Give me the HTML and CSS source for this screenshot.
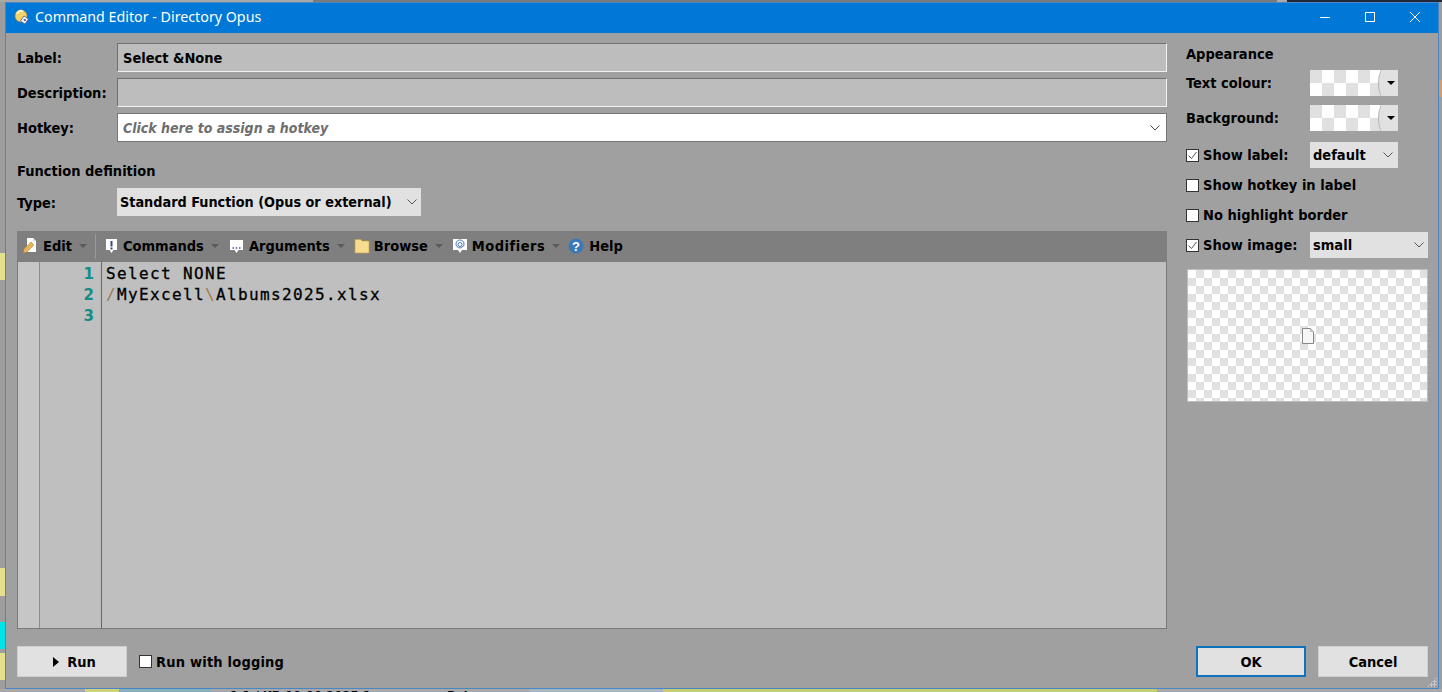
FILE: index.html
```html
<!DOCTYPE html>
<html lang="en">
<head>
<meta charset="utf-8">
<title>Command Editor - Directory Opus</title>
<link rel="stylesheet" href="styles.css">
</head>
<body>
<div class="desk-top"><span class="dt-a"></span><span class="dt-b"></span><span class="dt-c"></span><span class="dt-d"></span></div>
<div class="scrap scrap-y1"></div>
<div class="scrap scrap-y2"></div>
<div class="scrap scrap-c"></div>
<div class="scrap scrap-y3"></div>
<div class="scrap-r"></div>
<div class="desk-bottom"><span class="desk-y"></span><span class="desk-b"></span><span class="desk-text">1 1 / KB 00:00 2025 1</span><span class="desk-text2">Bytes</span><span class="desk-b2"></span><span class="desk-g"></span></div>
<div class="window">
  <header class="titlebar">
    <svg class="app-icon" viewBox="0 0 16 16" width="16" height="16"><circle cx="7" cy="7" r="6" fill="#f4d26a" stroke="#a98a3a" stroke-width=".7"/><path d="M3 5a4 4 0 0 1 6-2.5" stroke="#fff6c8" stroke-width="2" fill="none"/><path d="M10 7l4.5 3-3.500 5-4.500-3z" fill="#fff" stroke="#4a5a90" stroke-width=".8"/><circle cx="10.800" cy="11" r="1.200" fill="#5a6cb0"/></svg>
    <span class="title-text">Command Editor - Directory Opus</span>
    <div class="caption">
      <svg width="12" height="12" viewBox="0 0 12 12"><path d="M1 6.500h10" stroke="#fff" fill="none"/></svg>
      <svg width="12" height="12" viewBox="0 0 12 12"><rect x="1.500" y="1.500" width="9" height="9" stroke="#fff" fill="none"/></svg>
      <svg width="12" height="12" viewBox="0 0 12 12"><path d="M1 1l10 10M11 1L1 11" stroke="#fff" fill="none"/></svg>
    </div>
  </header>
  <div class="client">
    <main class="left">
      <div class="form-row"><label class="lbl">Label:</label><div class="field">Select &amp;None</div></div>
      <div class="form-row"><label class="lbl">Description:</label><div class="field"></div></div>
      <div class="form-row"><label class="lbl">Hotkey:</label>
        <div class="field field-white"><span class="hint">Click here to assign a hotkey</span>
          <svg class="chev" width="10" height="6" viewBox="0 0 10 6"><path d="M.5.500L5 5 9.500.5" stroke="#444" fill="none"/></svg></div></div>
      <h2 class="heading fn-heading">Function definition</h2>
      <div class="form-row type-row"><label class="lbl">Type:</label>
        <div class="combo combo-type"><span>Standard Function (Opus or external)</span>
          <svg class="chev" width="10" height="6" viewBox="0 0 10 6"><path d="M.5.500L5 5 9.500.5" stroke="#555" fill="none"/></svg></div></div>
      <section class="editor">
        <nav class="toolbar">
          <span class="tool t-edit">
            <svg width="16" height="18" viewBox="0 0 16 18"><path d="M5 1h6l3 3v11H5z" fill="#fff"/><path d="M11 1v3h3" fill="#ddd"/><path d="M1 16l1-4 7-7 3 3-7 7z" fill="#e8b458" stroke="#a87a30" stroke-width=".5"/></svg>
            <b>Edit</b><i class="caret"></i></span>
          <span class="tool-sep"></span>
          <span class="tool t-cmd">
            <svg width="15" height="18" viewBox="0 0 15 18"><path d="M2 2h11v11H9.500L7.500 16l-2-3H2z" fill="#fff"/><path d="M7.500 4v5.500M7.500 10.500v2" stroke="#3a4a70" stroke-width="2"/></svg>
            <b>Commands</b><i class="caret"></i></span>
          <span class="tool t-arg">
            <svg width="15" height="18" viewBox="0 0 15 18"><path d="M1 3h13v10H9.500L7.500 16l-2-3H1z" fill="#fff"/><path d="M3.500 11h1.500M6.700 11h1.500M10 11h1.500" stroke="#3a5a90" stroke-width="1.500"/></svg>
            <b>Arguments</b><i class="caret"></i></span>
          <span class="tool t-brw">
            <svg width="16" height="18" viewBox="0 0 16 18"><path d="M1 4V2.500h6L8 4h7v12H1z" fill="#f7dc8e" stroke="#c4a050" stroke-width=".7"/></svg>
            <b>Browse</b><i class="caret"></i></span>
          <span class="tool t-mod">
            <svg width="14" height="18" viewBox="0 0 14 18"><path d="M0 2h14v11H9L7 16l-2-3H0z" fill="#fff"/><circle cx="7" cy="7.500" r="2" fill="none" stroke="#4a7ab0"/><path d="M9 9.500c1.500.5 2-1 2-2.500a4 4 0 1 0-2 3.400" fill="none" stroke="#4a7ab0"/></svg>
            <b>Modifiers</b><i class="caret"></i></span>
          <span class="tool t-help">
            <svg width="16" height="18" viewBox="0 0 16 18"><circle cx="8" cy="9" r="7.500" fill="#3b78b8"/><text x="8" y="13.500" text-anchor="middle" class="help-q">?</text></svg>
            <b>Help</b></span>
        </nav>
        <div class="code">
          <div class="margin"></div>
          <div class="numbers"><div>1</div><div>2</div><div>3</div></div>
          <div class="source"><div>Select NONE</div><div><span class="slash">/</span>MyExcell<span class="slash">\</span>Albums2025.xlsx</div></div>
        </div>
      </section>
    </main>
    <aside class="right">
      <h2 class="heading app-heading">Appearance</h2>
      <div class="side-row r-text"><span class="side-lbl">Text colour:</span><div class="swatch"><span class="swatch-btn"><i class="caret-black"></i></span></div></div>
      <div class="side-row r-bg"><span class="side-lbl">Background:</span><div class="swatch"><span class="swatch-btn"><i class="caret-black"></i></span></div></div>
      <div class="side-row r-label"><span class="check on"><svg width="11" height="11" viewBox="0 0 11 11"><path d="M1.500 5.500l3 3 5-6.500" stroke="#555" fill="none"/></svg></span><span class="side-lbl chk-lbl">Show label:</span>
        <div class="combo combo-sm">default<svg class="chev" width="10" height="6" viewBox="0 0 10 6"><path d="M.5.500L5 5 9.500.5" stroke="#555" fill="none"/></svg></div></div>
      <div class="side-row r-hot"><span class="check"></span><span class="side-lbl">Show hotkey in label</span></div>
      <div class="side-row r-nohl"><span class="check"></span><span class="side-lbl">No highlight border</span></div>
      <div class="side-row r-img"><span class="check on"><svg width="11" height="11" viewBox="0 0 11 11"><path d="M1.500 5.500l3 3 5-6.500" stroke="#555" fill="none"/></svg></span><span class="side-lbl chk-lbl">Show image:</span>
        <div class="combo combo-lg">small<svg class="chev" width="10" height="6" viewBox="0 0 10 6"><path d="M.5.500L5 5 9.500.5" stroke="#555" fill="none"/></svg></div></div>
      <div class="preview"><svg width="12" height="16" viewBox="0 0 12 16"><path d="M.5.500h8l3 3v12H.5z" fill="#f7f7f7" stroke="#888"/><path d="M8.500.5v3h3" fill="#ccc" stroke="#aaa" stroke-width=".6"/></svg></div>
    </aside>
    <footer class="footer">
      <button class="btn btn-run"><i class="play"></i>Run</button>
      <span class="check log-check"></span><span class="side-lbl log-lbl">Run with logging</span>
      <span class="spring"></span>
      <button class="btn btn-ok">OK</button>
      <button class="btn btn-cancel">Cancel</button>
    </footer>
    <div class="grip"></div>
  </div>
</div>
</body>
</html>
```
FILE: styles.css
```css
* { box-sizing: border-box; }
html, body { margin: 0; height: 100%; }
body {
  width: 1442px; height: 692px; overflow: hidden; position: relative;
  background: #9d9d9d;
  padding: 2px 3px 3px 5px;
  font-family: "DejaVu Sans", sans-serif;
  font-stretch: condensed;
  font-weight: 700;
  font-size: 14.500px;
  color: #000;
}
.desk-top { position: absolute; left: 0; right: 0; top: 0; height: 2px; display: flex; }
.dt-a { width: 313px; background: #a9a9a9; }
.dt-b { width: 964px; background: #7a7a7a; }
.dt-c { width: 10px; background: #aaa; }
.dt-d { flex: 1; background: #20283a; }
.scrap { position: absolute; left: 0; width: 5px; }
.scrap-y1 { top: 253px; height: 27px; background: #e6e08e; }
.scrap-y2 { top: 568px; height: 28px; background: #e6e08e; }
.scrap-c { top: 622px; height: 27px; background: #00e4ea; }
.scrap-y3 { top: 653px; height: 27px; background: #e6e08e; }
.scrap-r { position: absolute; right: 0; top: 80px; width: 3px; height: 17px; background: #d89a68; }
.desk-bottom { position: absolute; left: 0; right: 0; bottom: 0; height: 3px; display: flex; overflow: hidden; background: #a8a8a8; }
.desk-y { margin-left: 85px; width: 34px; background: #cfd27a; }
.desk-b { width: 92px; background: #84b0bc; }
.desk-text { width: 236px; padding-left: 19px; font-size: 13px; line-height: 14px; white-space: nowrap; overflow: hidden; }
.desk-text2 { width: 83px; font-size: 13px; line-height: 14px; }
.desk-b2 { width: 133px; background: #a5b6c4; }
.desk-g { width: 494px; background: #c4cc74; }

.window {
  width: 1434px; height: 687px;
  border: 1px solid #4a86c4;
  background: #a0a0a0;
  display: flex; flex-direction: column;
  position: relative;
}
.titlebar {
  height: 30px; flex: none;
  background: #0078d7;
  color: #fff;
  display: flex; align-items: center;
  padding: 0 0 3px 8px;
  font-family: "Noto Sans", sans-serif;
  font-stretch: normal;
  font-weight: 400;
  font-size: 14.250px;
}
.app-icon { margin-right: 5px; }
.caption { margin-left: auto; display: flex; gap: 33px; margin-right: 17px; }

.client {
  flex: 1; position: relative;
  padding: 10px 10px 11px 11px;
  display: grid;
  grid-template-columns: 1150px 1fr;
  grid-template-rows: 1fr 31px;
  column-gap: 19px;
  row-gap: 17px;
}
.left { display: flex; flex-direction: column; min-height: 0; }
.form-row { display: flex; align-items: center; height: 29px; margin-bottom: 6px; }
.lbl { width: 100px; flex: none; padding-top: 1px; }
.field {
  flex: 1; height: 100%;
  background: #bdbdbd;
  border: 1px solid;
  border-color: #707070 #f2f2f2 #f2f2f2 #707070;
  padding: 0 5px;
  display: flex; align-items: center;
}
.field-white { background: #fff; border-color: #767676; justify-content: space-between; }
.hint { color: #6e6e6e; font-style: italic; font-size: 14px; }
.field-white .chev { margin-right: 1px; }
.heading { margin: 0; font-size: 14.500px; font-weight: 700; line-height: 18px; }
.fn-heading { margin-top: 14px; margin-bottom: 8px; }
.type-row { margin-bottom: 15px; height: 28px; }
.combo {
  height: 100%; background: #e1e1e1;
  display: flex; align-items: center; justify-content: space-between;
  padding: 0 3px;
}
.combo-type { width: 304px; padding-right: 4px; font-size: 14.300px; }
.chev { flex: none; }

.editor { flex: 1; display: flex; flex-direction: column; min-height: 0; }
.toolbar {
  height: 31px; flex: none;
  background: #7f7f7f;
  display: flex; align-items: center;
  padding: 0 0 1px 5px;
}
.tool { display: flex; align-items: center; gap: 5px; }
.tool b { font-weight: 700; }
.caret { width: 0; height: 0; border: 4px solid transparent; border-top: 4px solid #5a5a5a; border-bottom: 0; margin-left: 2px; }
.tool-sep { width: 1px; height: 25px; background: #9a9a9a; margin: 0 8px; }
.t-cmd { gap: 4px; }
.t-cmd .caret { margin-left: 3px; }
.t-brw { gap: 4px; margin-left: 9px; }
.t-brw .caret { margin-left: 3px; }
.t-arg { margin-left: 10px; }
.t-mod { margin-left: 10px; }
.t-mod b { letter-spacing: .5px; }
.t-help { margin-left: 8px; }
.help-q { font: 700 13px "Liberation Sans", sans-serif; fill: #fff; }
.code {
  flex: 1; display: flex; min-height: 0;
  background: #bfbfbf;
  border: 1px solid #7a7a7a; border-top: 0;
  font-family: "DejaVu Sans Mono", monospace;
  font-stretch: normal;
  font-weight: 400;
  font-size: 16px;
  line-height: 21px;
  padding-top: 1px;
}
.margin { width: 22px; margin-top: -1px; background: #c6c6c6; border-right: 1px solid #8c8c8c; flex: none; }
.numbers {
  width: 62px; flex: none; text-align: right; padding: 2px 7px 0 0; margin-top: -1px;
  color: #168c86; font-weight: 700; font-size: 15px;
  border-right: 1px solid #128a90;
  font-family: "DejaVu Sans", sans-serif;
}
.source { padding: 0 0 0 4px; letter-spacing: 1.370px; -webkit-text-stroke: .3px #000; }
.slash { color: #a07a50; -webkit-text-stroke: 0; }

.right { display: flex; flex-direction: column; }
.app-heading { margin-top: 2px; margin-bottom: 7px; height: 18px; }
.side-row { display: flex; align-items: center; flex: none; }
.r-text, .r-bg { justify-content: space-between; width: 212px; height: 26px; margin-bottom: 9px; }
.r-label { height: 26px; margin-top: 2px; margin-bottom: 4px; }
.r-hot, .r-nohl { height: 26px; margin-bottom: 4px; }
.r-img { height: 26px; margin-bottom: 11px; }
.swatch {
  width: 88px; height: 26px; position: relative; overflow: hidden;
  background: repeating-conic-gradient(#e0e0e0 0 25%, #fff 0 50%) 12px 0 / 24px 26px;
}
.swatch-btn {
  position: absolute; right: 0; top: -4px; bottom: -4px; width: 20px;
  background: #e1e1e1;
  border-left: 1px solid #b0b0b0;
  border-radius: 8px 0 0 8px / 17px 0 0 17px;
  display: flex; align-items: center; justify-content: center;
}
.caret-black { width: 0; height: 0; border: 4px solid transparent; border-top: 4px solid #000; border-bottom: 0; margin-left: 4px; }
.check {
  width: 13px; height: 13px; flex: none;
  background: #fff; border: 1px solid #333;
  display: inline-flex; align-items: center; justify-content: center;
  margin-right: 4px;
}
.chk-lbl { width: 107px; flex: none; }
.combo-sm { width: 88px; height: 26px; padding-right: 5px; }
.combo-lg { width: 118px; height: 26px; padding-right: 4px; }
.preview {
  width: 241px; height: 133px; margin-left: 1px;
  border: 1px solid #bdbdbd;
  background: repeating-conic-gradient(#e0e0e0 0 25%, #fff 0 50%) 0 0 / 16px 16px;
  display: flex; align-items: center; justify-content: center;
}

.footer { grid-column: 1 / -1; display: flex; align-items: center; }
.btn {
  width: 110px; height: 31px; padding: 0;
  background: #e1e1e1; border: 1px solid #cfcfcf;
  font: inherit; font-stretch: condensed; color: #000;
  display: flex; align-items: center; justify-content: center;
}
.btn-run { padding-left: 5px; }
.play { width: 0; height: 0; border: 5px solid transparent; border-left: 6px solid #000; border-right: 0; margin-right: 8px; }
.log-check { margin-left: 12px; margin-right: 4px; }
.log-lbl { letter-spacing: .2px; }
.spring { flex: 1; }
.btn-ok { border: 2px solid #0f72bd; margin-right: 12px; }
.grip {
  position: absolute; right: 1px; bottom: 1px; width: 10px; height: 10px;
  background: radial-gradient(circle, #c9c9c9 1px, transparent 1.400px) 0 0 / 3px 3px;
  clip-path: polygon(100% 0, 100% 100%, 0 100%);
}
```
